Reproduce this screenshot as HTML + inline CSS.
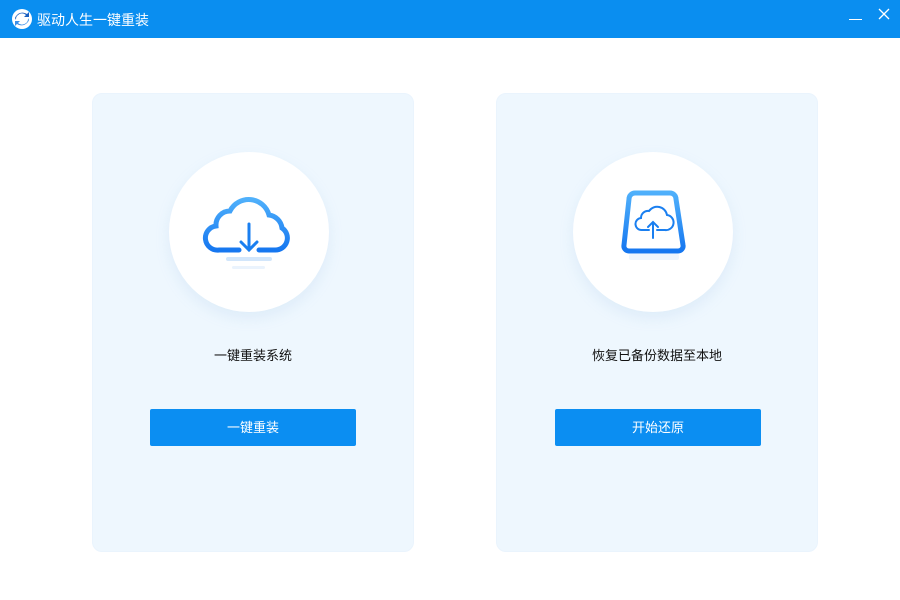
<!DOCTYPE html>
<html><head><meta charset="utf-8"><style>
*{margin:0;padding:0;box-sizing:border-box}
body{width:900px;height:600px;background:#fff;font-family:"Liberation Sans","Noto Sans CJK SC",sans-serif;position:relative;overflow:hidden}
.bar{position:absolute;left:0;top:0;width:900px;height:38px;background:#0a8ef0;color:#fff}
.title{position:absolute;left:37px;top:10px;font-size:14px}
.card{position:absolute;top:93px;width:322px;height:459px;background:#eef7fe;border:1px solid #eaf4fd;border-radius:10px}
.circ{position:absolute;left:76px;top:58px;width:160px;height:160px;border-radius:50%;background:#fff;box-shadow:0 6px 14px rgba(150,190,230,.18)}
.lbl{position:absolute;left:0;width:100%;top:251px;text-align:center;font-size:13px;color:#111}
.btn{position:absolute;left:57px;top:315px;width:206px;height:37px;background:#0b8ef2;border-radius:2px;color:#fff;font-size:13px;text-align:center;line-height:37px}
</style></head><body>
<div class="bar">
<svg style="position:absolute;left:12px;top:9px" width="20" height="20" viewBox="0 0 20 20"><circle cx="10" cy="10" r="10" fill="#fff"/><path d="M4 11a6 6 0 0 1 10-5l-2 2h5V3l-2 2A8 8 0 0 0 3 9z" fill="#1a5fc0"/><path d="M16 9a6 6 0 0 1-10 5l2-2H3v5l2-2a8 8 0 0 0 12-4z" fill="#3a8ee8"/></svg>
<div class="title">驱动人生一键重装</div>
<div style="position:absolute;left:849px;top:19px;width:13px;height:1px;background:#fff"></div>
<svg style="position:absolute;left:878px;top:8px" width="12" height="12"><path d="M1 1L11 11M11 1L1 11" stroke="#fff" stroke-width="1.3"/></svg>
</div>
<div class="card" style="left:92px">
<div class="circ">
<svg style="position:absolute;left:0;top:0" width="160" height="160" viewBox="0 0 160 160">
<defs><linearGradient id="g" x1="0" y1="0" x2="0" y2="1"><stop offset="0" stop-color="#4fb0fb"/><stop offset="1" stop-color="#1677f0"/></linearGradient></defs>
<path d="M70 98H50a12 12 0 0 1-3-24 14 14 0 0 1 14-15 21 21 0 0 1 39 4 15 15 0 0 1 13 13 12 12 0 0 1-7 22H90" fill="none" stroke="url(#g)" stroke-width="5" stroke-linecap="round"/>
<path d="M80 72V98M72 90l8 8 8-8" fill="none" stroke="#1a7ff0" stroke-width="3" stroke-linecap="round"/>
<rect x="57" y="105" width="46" height="4" rx="2" fill="#d2e6fb"/>
<rect x="63" y="114" width="33" height="3" rx="1.5" fill="#eaf3fd"/>
</svg></div>
<div class="lbl">一键重装系统</div>
<div class="btn">一键重装</div>
</div>
<div class="card" style="left:496px">
<div class="circ">
<svg style="position:absolute;left:0;top:0" width="160" height="160" viewBox="0 0 160 160">
<defs><linearGradient id="h" x1="0" y1="0" x2="0" y2="1"><stop offset="0" stop-color="#4fb0fb"/><stop offset="1" stop-color="#1677f0"/></linearGradient></defs>
<path d="M62 41h35a6 6 0 0 1 6 6l7 46a5 5 0 0 1-5 6H56a5 5 0 0 1-5-6l5-46a6 6 0 0 1 6-6z" fill="#fff" stroke="url(#h)" stroke-width="5"/>
<rect x="56" y="102" width="50" height="6" rx="2" fill="#eef5fd"/>
<path d="M76 78h-7a6 6 0 0 1-1-12 7 7 0 0 1 8-7 10 10 0 0 1 18 4 7 7 0 0 1-2 15h-8" fill="none" stroke="#1a7ff0" stroke-width="2" stroke-linecap="round"/>
<path d="M80 86V70M75 75l5-5 5 5" fill="none" stroke="#1a7ff0" stroke-width="2" stroke-linecap="round"/>
</svg></div>
<div class="lbl">恢复已备份数据至本地</div>
<div class="btn" style="left:58px">开始还原</div>
</div>
</body></html>
